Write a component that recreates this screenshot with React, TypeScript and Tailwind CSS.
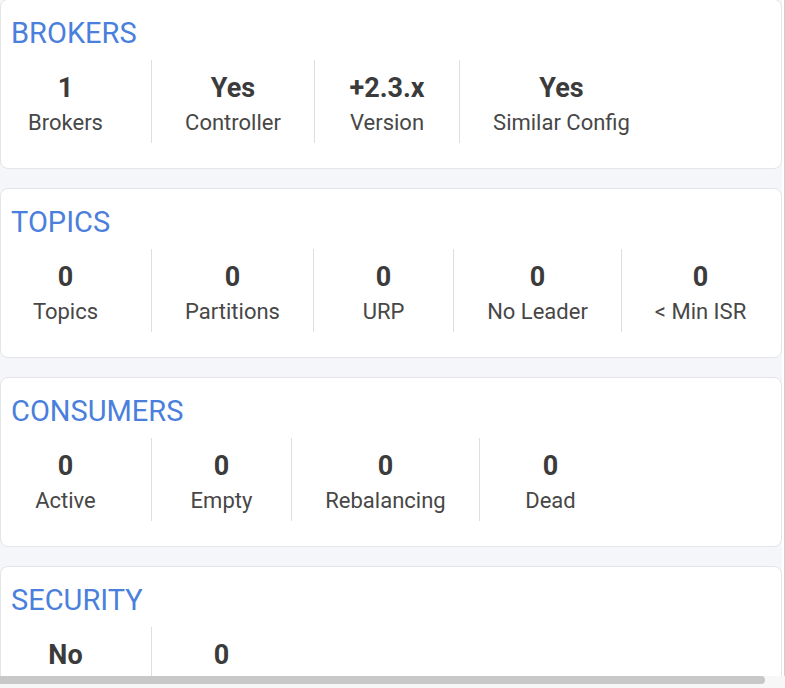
import React from "react";

type Stat = { value: string; label: string; w: string; first?: boolean };

const sections: { title: string; stats: Stat[] }[] = [
  {
    title: "BROKERS",
    stats: [
      { value: "1", label: "Brokers", w: "w-[150px]", first: true },
      { value: "Yes", label: "Controller", w: "w-[163px]" },
      { value: "+2.3.x", label: "Version", w: "w-[145px]" },
      { value: "Yes", label: "Similar Config", w: "w-[204px]" },
    ],
  },
  {
    title: "TOPICS",
    stats: [
      { value: "0", label: "Topics", w: "w-[150px]", first: true },
      { value: "0", label: "Partitions", w: "w-[162px]" },
      { value: "0", label: "URP", w: "w-[140px]" },
      { value: "0", label: "No Leader", w: "w-[168px]" },
      { value: "0", label: "< Min ISR", w: "w-[158px]" },
    ],
  },
  {
    title: "CONSUMERS",
    stats: [
      { value: "0", label: "Active", w: "w-[150px]", first: true },
      { value: "0", label: "Empty", w: "w-[140px]" },
      { value: "0", label: "Rebalancing", w: "w-[188px]" },
      { value: "0", label: "Dead", w: "w-[142px]" },
    ],
  },
  {
    title: "SECURITY",
    stats: [
      { value: "No", label: "", w: "w-[150px]", first: true },
      { value: "0", label: "", w: "w-[140px]" },
    ],
  },
];

function Card({ title, stats }: { title: string; stats: Stat[] }) {
  return (
    <div className="h-[170px] shrink-0 rounded-[8px] border border-[#e3e5ea] bg-white pl-[10px] pt-[17px]">
      <div className="text-[29px] leading-[32px] font-normal text-[#4a80dc]">{title}</div>
      <div className="mt-[11px] flex">
        {stats.map((s, i) => (
          <div
            key={i}
            className={`${s.w} ${s.first ? "-ml-[10px] pr-[21px]" : "border-l border-[#dedede]"} flex h-[83px] flex-col items-center pt-[12px] pb-[6px]`}
          >
            <div className="text-[27px] leading-[32px] font-bold text-[#3b3b3b] whitespace-nowrap">{s.value}</div>
            {s.label ? (
              <div className="mt-[5px] text-[22px] leading-[28px] text-[#474747] whitespace-nowrap">{s.label}</div>
            ) : null}
          </div>
        ))}
      </div>
    </div>
  );
}

export default function App() {
  return (
    <div
      className="relative flex h-[688px] w-[785px] overflow-hidden bg-white"
      style={{ fontFamily: "Roboto, 'Noto Sans', sans-serif" }}
    >
      <div className="-mt-px flex w-[782px] shrink-0 flex-col gap-[19px] bg-[#f5f6fa]">
        {sections.map((s) => (
          <Card key={s.title} title={s.title} stats={s.stats} />
        ))}
      </div>
      <div className="w-[2px] shrink-0 bg-white" />
      <div className="w-px shrink-0 bg-[#cfcfcf]" />
      <div className="absolute bottom-0 left-0 h-[12px] w-[785px] bg-[#f7f7f7]">
        <div className="h-[8px] w-[765px] rounded-r-full bg-[#c8c8c8]" />
      </div>
    </div>
  );
}
